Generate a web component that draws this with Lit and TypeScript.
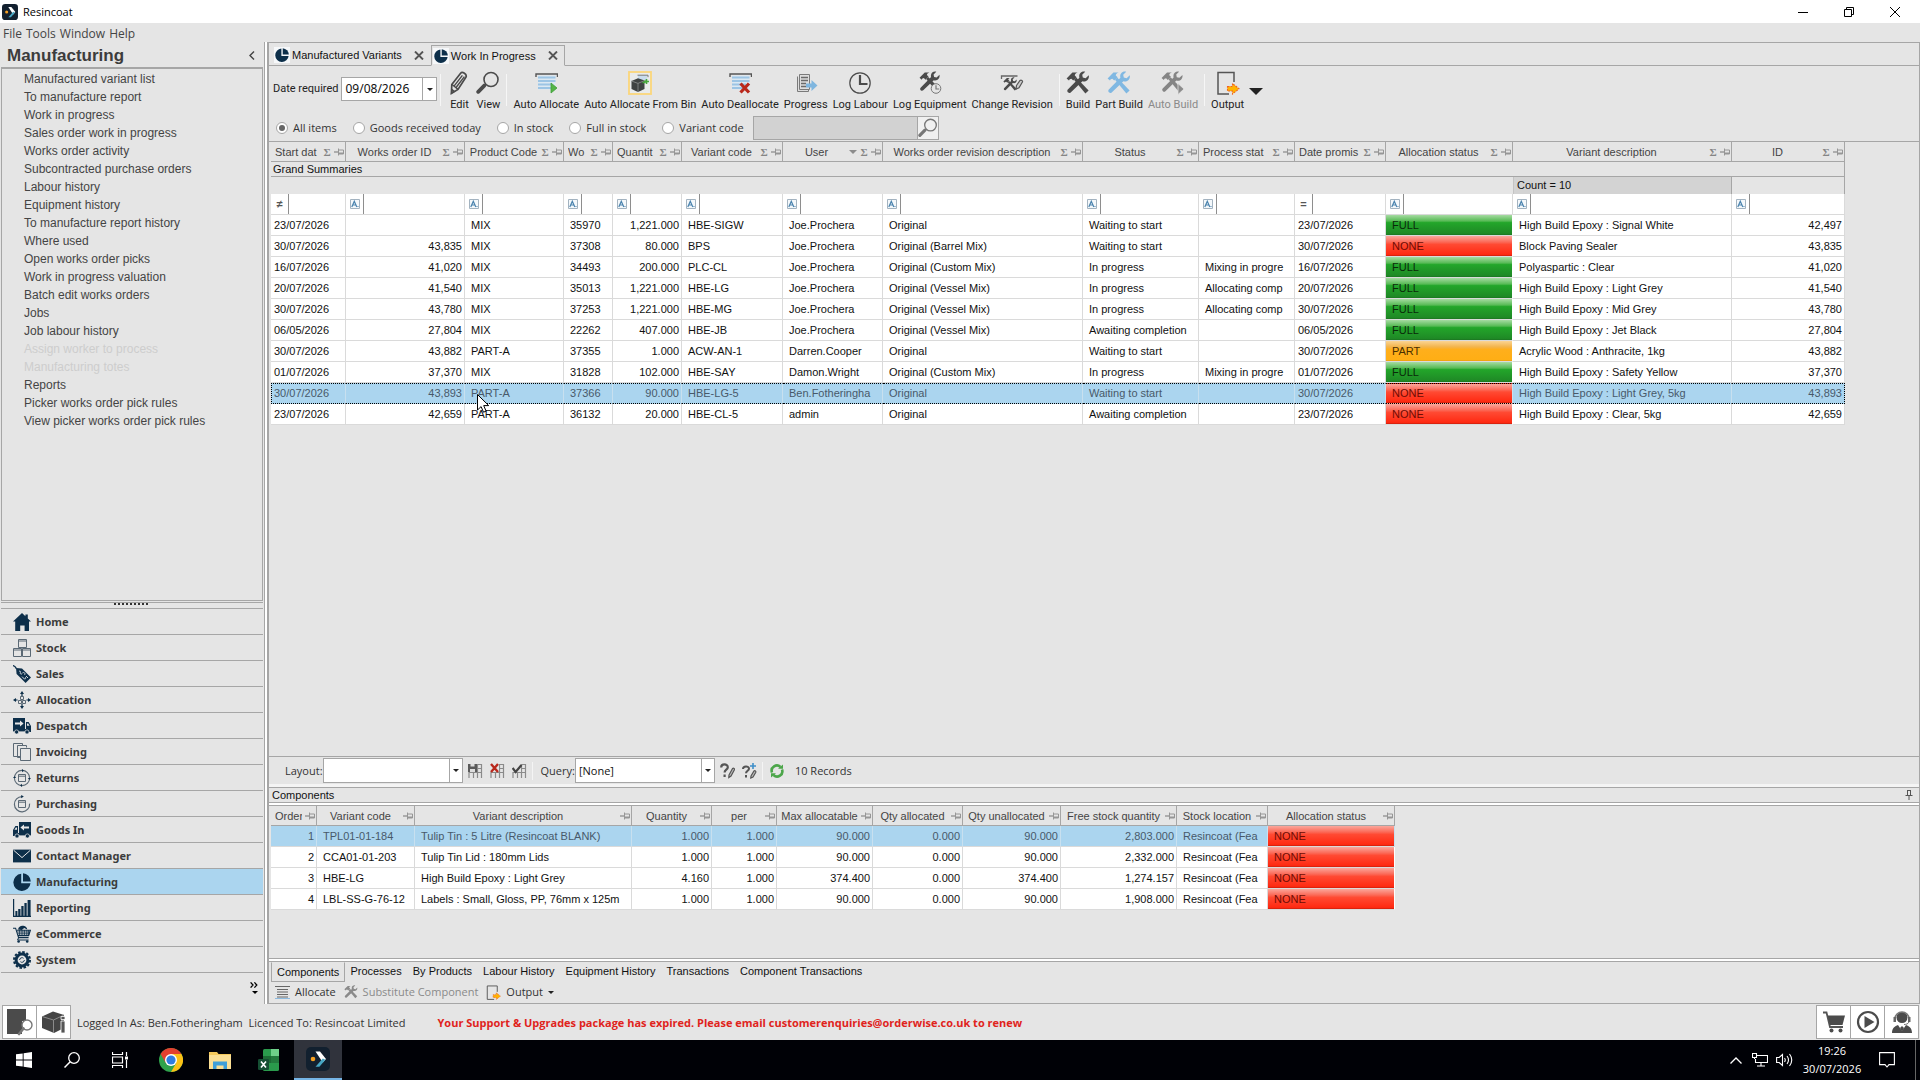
import { LitElement, html, svg, css, nothing } from "lit";
import { customElement } from "lit/decorators.js";
import { classMap } from "lit/directives/class-map.js";

const NAVY = "#0d2f4a";
const INK = "#4b4b4b";

const icon = (w: number, h: number, vb: string, body: unknown) => html`<svg
  width=${w} height=${h} viewBox=${vb} aria-hidden="true" focusable="false">${body}</svg>`;

/* ---------- shared shapes ---------- */
const logo = (s: number) => icon(s, s, "0 0 24 24", svg`
  <rect width="24" height="24" rx="5" fill="#12202f"/>
  <path d="M9.500 4.500h4.500l6 7.500-3.200 3.600z" fill="#fff"/>
  <path d="M16.800 11.500l2.600 1.200-6 7H9.500z" fill="#46a6c4"/>
  <circle cx="7" cy="12" r="2.300" fill="#f6a021"/>`);

const pie = (s: number) => icon(s, s, "0 0 18 18", svg`
  <path d="M8.200 .8a8.600 8.600 0 1 0 9.300 9.400H8.200z" fill=${NAVY}/>
  <path d="M10 .2A8.600 8.600 0 0 1 17.800 8.400H10z" fill=${NAVY}/>`);

const magnifier = (s: number, c = INK) => icon(s, s, "0 0 24 24", svg`
  <circle cx="15" cy="8.5" r="7" fill="none" stroke=${c} stroke-width="1.600"/>
  <path d="M9.800 13.200L8 15" stroke=${c} stroke-width="1.600"/>
  <path d="M8.300 14.600L2.200 20.800" stroke=${c} stroke-width="3.800" stroke-linecap="round"/>`);

const toolsShape = (c: string) => svg`
  <path d="M.6 7.400L6.400 1.600h5.200c-1.800 .6-2.800 1.600-2.800 2.800l1.800 1.800-3.400 3.400-1.800-1.800-1.700 .4L3 9.600z" fill=${c}/>
  <path d="M8 8.800l2.200-2.200L22.600 19.400 19.400 22.600z" fill=${c}/>
  <path d="M22.800 4.200l-3.200 3-2.800-.6-.6-2.800 3-3c-2.800-.8-6 1-6 4.400 0 .8 .1 1.200 .2 1.600L1.800 18.600c-1.600 1.800 1 4.600 2.900 2.900L16.400 10.200c3.600 1.200 7.200-1.900 6.400-6z" fill=${c}/>`;
const tools = (s: number, c: string) => icon(s, s, "0 0 24 24", toolsShape(c));

const sheetShape = svg`
  <path d="M1 4V1h21.500v3" fill="none" stroke="#555" stroke-width="1.400"/>
  <rect x="3" y="2.500" width="17.500" height="14" fill="#dbe8f2"/>
  <path d="M3 4.500h17.500M3 8h17.500M3 11.500h14M3 15h14" stroke="#9cc4e4" stroke-width="1.800"/>`;

const outputShape = svg`
  <path d="M18 11V1.500H2V23h11" fill="none" stroke="#555" stroke-width="1.500"/>
  <path d="M11.500 15.500h5v-3l6.500 5.300-6.500 5.200v-3h-5z" fill="#ffb400" stroke="#f0641e" stroke-width="1.100" stroke-dasharray="2 1"/>`;
const output = (s: number) => icon(s, s, "0 0 24 24", outputShape);

const pin = icon(10, 8, "0 0 10 8", svg`
  <path d="M0 4h4" stroke="#969696" stroke-width="1.400"/>
  <path d="M4.500 .5v7M4.500 2h5v4h-5" fill="none" stroke="#969696"/>
  <path d="M5 4.500h4.500V6H5z" fill="#969696"/>`);

const arrow = (w: number, c = "#222") => icon(w, w / 2, "0 0 10 5", svg`<path d="M0 0h10L5 5z" fill=${c}/>`);

const truckShape = svg`
  <path d="M0 1h12v11H0z" fill=${NAVY}/>
  <path d="M13 5h2.600L18 9v6h-5z" fill=${NAVY}/>
  <path d="M14 6.400h1.200l1.400 2.400H14z" fill="#e5e5e5"/>
  <path d="M0 12h18v2.400H0z" fill=${NAVY}/>
  <circle cx="3.600" cy="15" r="2.100" fill=${NAVY} stroke="#e5e5e5" stroke-width=".7"/>
  <circle cx="14" cy="15" r="2.100" fill=${NAVY} stroke="#e5e5e5" stroke-width=".7"/>
  <path d="M2 5.600h5V3.600l3.600 3L7 9.600v-2H2z" fill="#e5e5e5"/>`;

/* ---------- module icons ---------- */
const line = (d: string, w = 1) => svg`<path d=${d} fill="none" stroke="#5b6975" stroke-width=${w}/>`;
const nav = (body: unknown) => icon(18, 18, "0 0 18 18", body);

const modules: [string, unknown][] = [
  ["Home", nav(svg`<path d="M9 0l3.400 3.200V1.600h2.400v3.800L18 8.600h-2V18h-4.400v-5.400H7.200V18H2.200V8.600H0z" fill=${NAVY}/>`)],
  ["Stock", nav(line("M5.500 .5h8v8h-8zM.5 9.500h8v8h-8zM9.500 9.500h8v8h-8zM5.500 2h8M.5 11h8M9.500 11h8"))],
  ["Sales", nav(svg`
    <path d="M0 .6c2 .4 2.600 1.400 3.400 3" fill="none" stroke=${NAVY} stroke-width="1.400"/>
    <path d="M3 3l6 .4L18 12.400 12.600 18 3.600 9z" fill=${NAVY}/>
    <path d="M6 6.400c1-.8 2 .2 1.400 1.200s.4 2 1.600 1.200M9.400 8c1.800-1.400 3.400 .6 2 2M9 11.600l2.400 2.400c1.200 .2 1.800-.8 1-1.800M13 11l2 2" fill="none" stroke="#cfd6dc" stroke-width="1"/>`)],
  ["Allocation", nav(svg`
    <path d="M9 0l2 3H7zM9 18l2-3H7zM0 9l3-2v4zM18 9l-3-2v4z" fill=${NAVY}/>
    <path d="M9 2v3M9 13v3M2 9h2.600M13.400 9H16" stroke=${NAVY} stroke-width="1.200"/>
    ${line("M7.500 5.500h3v3h-3zM5.500 9.500h3v3h-3zM9.500 9.500h3v3h-3z")}`)],
  ["Despatch", nav(truckShape)],
  ["Invoicing", nav(svg`${line("M8.500 13.500h-8v-13h9v2M4.500 14.500v-12h9v2M4.500 14.500h3")}
    <path d="M7.500 5.500h10v12h-10z" fill="#e5e5e5" stroke="#5b6975"/>`)],
  ["Returns", nav(svg`${line("M5.500 5.500h7v7h-7zM5.500 7.200h7")}
    <circle cx="9" cy="9" r="7.600" fill="none" stroke="#5b6975" stroke-width="1.100"/>
    <path d="M9 0l1.800 1.600L9 3.200zM9 18l-1.800-1.600L9 14.800zM0 9l1.600-1.800L3.200 9zM18 9l-1.600 1.800L14.800 9z" fill=${NAVY}/>`)],
  ["Purchasing", nav(svg`${line("M5.500 5.500h7v7h-7zM5.500 7.200h7")}
    <path d="M9 1.600A7.600 7.600 0 1 0 16.600 8.600" fill="none" stroke="#5b6975" stroke-width="1.200"/>
    <path d="M8.200 0l2.600 1.600-2.600 1.700z" fill=${NAVY}/>`)],
  ["Goods In", nav(svg`<g transform="translate(18 0) scale(-1 1)">${truckShape}</g>`)],
  ["Contact Manager", nav(svg`<path d="M0 2.600h18v12.800H0z" fill=${NAVY}/>
    <path d="M.6 3.200L9 10.600l8.400-7.400" fill="none" stroke="#e5e5e5" stroke-width="1"/>`)],
  ["Manufacturing", pie(18)],
  ["Reporting", nav(svg`<path d="M.6 0v17.400H18" fill="none" stroke=${NAVY} stroke-width="1.200"/>
    <path d="M2.400 12h2v5h-2zM5.200 10h2.300v7H5.200zM8.300 7h2.300v10H8.300zM11.400 4h2.300v13h-2.300zM14.600 1h3v16h-3z" fill=${NAVY}/>`)],
  ["eCommerce", nav(svg`<path d="M5 4.600C5.600 1.400 8 .4 10.400 .8c2.600 .4 3.800 2 3.800 3.800l-3-1.600-2.400 2z" fill=${NAVY}/>
    <path d="M0 3.200h2.600l3 9.400h10M4 5.200h13.400l-1.800 5.400H5.200" fill="none" stroke=${NAVY} stroke-width="1.100"/>
    <path d="M4 7h13M5 8.800h11.400M6.600 5v6M9 5v6M11.400 5v6M13.800 5v6M15.600 5v6" stroke=${NAVY} stroke-width=".8"/>
    <path d="M5.600 12.600L4.600 15h11" fill="none" stroke=${NAVY}/>
    <circle cx="5.600" cy="16.500" r="1.300" fill=${NAVY}/><circle cx="14.200" cy="16.500" r="1.300" fill=${NAVY}/>`)],
  ["System", nav(svg`
    <circle cx="9" cy="9" r="8" fill="none" stroke=${NAVY} stroke-width="2" stroke-dasharray="2.500 1.690"/>
    <circle cx="9" cy="9" r="5.900" fill="none" stroke=${NAVY} stroke-width="3"/>
    <path d="M6.600 9a2.400 2.400 0 0 1 4-1.700M11.400 9a2.400 2.400 0 0 1-4 1.700" fill="none" stroke=${NAVY} stroke-width=".9"/>`)],
];

/* ---------- toolbar icons ---------- */
const big = (body: unknown) => icon(24, 24, "0 0 24 24", body);
const clockShape = svg`<circle cx="12" cy="12" r="10.200" fill="none" stroke=${INK} stroke-width="1.200"/>
  <path d="M12 4v9h7.500" fill="none" stroke=${INK} stroke-width="2.200"/>`;

const pencilIcon = big(svg`
  <path d="M4.800 13.500L13.600 2.200c1.800-2 6.600 1 5.400 3.800L11 18.400l-6.600 4z" fill="none" stroke=${INK} stroke-width="1.700"/>
  <path d="M7.400 14.600L15.400 4.400M9.400 16L17.400 5.600M5 13.500l5.800 4.600M4.600 22l.4-3.400 2.400 1.800z" fill="none" stroke=${INK} stroke-width="1.400"/>`);
const autoAllocateIcon = big(svg`<g transform="translate(1 2)">${sheetShape}</g>
  <path d="M17 12l6 5-6 5z" fill="#54b447" stroke="#3d9f38" stroke-width=".8"/>`);
const fromBinIcon = big(svg`<rect x="1" y="1" width="22" height="22" fill="#e9ebeb" stroke="#fbd67a" stroke-width="1.800"/>
  <path d="M10 4.500h9V9h-9z" fill="#c9dced"/><path d="M9.500 4.200h10.500v2" fill="none" stroke="#777"/>
  <path d="M3.500 10L10 7.200l6.500 2.400v8.300L10 21l-6.500-3z" fill="#3e4242"/>
  <path d="M3.500 10L10 12.400l6.500-2.800M10 12.400V21" fill="none" stroke="#8b8f8f" stroke-width=".8"/>
  <path d="M14.500 11.500c2 0 3-.6 3.400-2M18.500 8v5M16 10.500h5" stroke="#46a63c" stroke-width="1.600" fill="none"/>`);
const deallocateIcon = big(svg`<g transform="translate(1 2)">${sheetShape}</g>
  <path d="M12.500 12.500l8.500 9M21 12.500l-8.500 9" stroke="#b9281c" stroke-width="3.200"/>`);
const progressIcon = big(svg`
  <path d="M3.500 5.500v15h11V18" fill="#dedede" stroke="#7a7a7a"/><path d="M5.500 3.500h10v15h-10z" fill="#dedede" stroke="#7a7a7a"/>
  <path d="M7 6.500h7M7 9.500h7M7 12.500h5M7 15.500h5" stroke="#6a6a6a" stroke-width="1.300"/>
  <path d="M12 12.500h5.500V9l6 5.500-6 5.500v-3.500H12z" fill="#7fb6df"/>`);
const logLabourIcon = big(clockShape);
const logEquipmentIcon = big(svg`<g transform="translate(1 0) scale(.9)">${toolsShape(INK)}</g>
  <circle cx="18" cy="17.500" r="4.800" fill="#e5e5e5" stroke="#777"/>
  <path d="M18 14.200v3.800h3.200" fill="none" stroke="#777" stroke-width="1.200"/>`);
const revisionIcon = big(svg`<path d="M1.500 8V5h16" fill="none" stroke="#666" stroke-width="1.300"/>
  <g transform="translate(3 6) scale(.6)">${toolsShape(INK)}</g>
  <path d="M16.500 14.500l3.500-5c1.200-1 3 .2 2.400 1.600L19 16.800l-3 1.400z" fill="#ccc" stroke="#555" stroke-width="1.200"/>`);
const autoBuildIcon = big(svg`<g transform="scale(.94)">${toolsShape("#858585")}</g>
  <path d="M17 12.500l6 5.500-6 5.500z" fill="#8c8c8c" stroke="#e5e5e5" stroke-width=".8"/>`);

/* ---------- data ---------- */
const links = [
  "Manufactured variant list", "To manufacture report", "Work in progress", "Sales order work in progress",
  "Works order activity", "Subcontracted purchase orders", "Labour history", "Equipment history",
  "To manufacture report history", "Where used", "Open works order picks", "Work in progress valuation",
  "Batch edit works orders", "Jobs", "Job labour history", "Assign worker to process",
  "Manufacturing totes", "Reports", "Picker works order pick rules", "View picker works order pick rules",
];
const disabledLinks = new Set(["Assign worker to process", "Manufacturing totes"]);

type Col = { t: string; w: number; k: "d" | "n" | "t" | "s"; f?: string; sort?: boolean; cut?: boolean };
const cols: Col[] = [
  { t: "Start dat", w: 75, k: "d", f: "≠", cut: true },
  { t: "Works order ID", w: 119, k: "n" },
  { t: "Product Code", w: 99, k: "t" },
  { t: "Wo", w: 49, k: "t", cut: true },
  { t: "Quantit", w: 69, k: "n", cut: true },
  { t: "Variant code", w: 101, k: "t" },
  { t: "User", w: 100, k: "t", sort: true },
  { t: "Works order revision description", w: 200, k: "t" },
  { t: "Status", w: 116, k: "t" },
  { t: "Process stat", w: 96, k: "t", cut: true },
  { t: "Date promis", w: 91, k: "d", f: "=", cut: true },
  { t: "Allocation status", w: 127, k: "s" },
  { t: "Variant description", w: 219, k: "t" },
  { t: "ID", w: 113, k: "n" },
];
const rows: string[][] = [
  ["23/07/2026", "", "MIX", "35970", "1,221.000", "HBE-SIGW", "Joe.Prochera", "Original", "Waiting to start", "", "23/07/2026", "FULL", "High Build Epoxy : Signal White", "42,497"],
  ["30/07/2026", "43,835", "MIX", "37308", "80.000", "BPS", "Joe.Prochera", "Original (Barrel Mix)", "Waiting to start", "", "30/07/2026", "NONE", "Block Paving Sealer", "43,835"],
  ["16/07/2026", "41,020", "MIX", "34493", "200.000", "PLC-CL", "Joe.Prochera", "Original (Custom Mix)", "In progress", "Mixing in progre", "16/07/2026", "FULL", "Polyaspartic : Clear", "41,020"],
  ["20/07/2026", "41,540", "MIX", "35013", "1,221.000", "HBE-LG", "Joe.Prochera", "Original (Vessel Mix)", "In progress", "Allocating comp", "20/07/2026", "FULL", "High Build Epoxy : Light Grey", "41,540"],
  ["30/07/2026", "43,780", "MIX", "37253", "1,221.000", "HBE-MG", "Joe.Prochera", "Original (Vessel Mix)", "In progress", "Allocating comp", "30/07/2026", "FULL", "High Build Epoxy : Mid Grey", "43,780"],
  ["06/05/2026", "27,804", "MIX", "22262", "407.000", "HBE-JB", "Joe.Prochera", "Original (Vessel Mix)", "Awaiting completion", "", "06/05/2026", "FULL", "High Build Epoxy : Jet Black", "27,804"],
  ["30/07/2026", "43,882", "PART-A", "37355", "1.000", "ACW-AN-1", "Darren.Cooper", "Original", "Waiting to start", "", "30/07/2026", "PART", "Acrylic Wood : Anthracite, 1kg", "43,882"],
  ["01/07/2026", "37,370", "MIX", "31828", "102.000", "HBE-SAY", "Damon.Wright", "Original (Custom Mix)", "In progress", "Mixing in progre", "01/07/2026", "FULL", "High Build Epoxy : Safety Yellow", "37,370"],
  ["30/07/2026", "43,893", "PART-A", "37366", "90.000", "HBE-LG-5", "Ben.Fotheringha", "Original", "Waiting to start", "", "30/07/2026", "NONE", "High Build Epoxy : Light Grey, 5kg", "43,893"],
  ["23/07/2026", "42,659", "PART-A", "36132", "20.000", "HBE-CL-5", "admin", "Original", "Awaiting completion", "", "23/07/2026", "NONE", "High Build Epoxy : Clear, 5kg", "42,659"],
];
const compCols: Col[] = [
  { t: "Order", w: 46, k: "n", cut: true },
  { t: "Variant code", w: 98, k: "t" },
  { t: "Variant description", w: 217, k: "t" },
  { t: "Quantity", w: 80, k: "n" },
  { t: "per", w: 65, k: "n" },
  { t: "Max allocatable", w: 96, k: "n" },
  { t: "Qty allocated", w: 90, k: "n" },
  { t: "Qty unallocated", w: 98, k: "n" },
  { t: "Free stock quantity", w: 116, k: "n" },
  { t: "Stock location", w: 91, k: "t" },
  { t: "Allocation status", w: 127, k: "s" },
];
const compRows: string[][] = [
  ["1", "TPL01-01-184", "Tulip Tin : 5 Litre (Resincoat BLANK)", "1.000", "1.000", "90.000", "0.000", "90.000", "2,803.000", "Resincoat (Fea", "NONE"],
  ["2", "CCA01-01-203", "Tulip Tin Lid : 180mm Lids", "1.000", "1.000", "90.000", "0.000", "90.000", "2,332.000", "Resincoat (Fea", "NONE"],
  ["3", "HBE-LG", "High Build Epoxy : Light Grey", "4.160", "1.000", "374.400", "0.000", "374.400", "1,274.157", "Resincoat (Fea", "NONE"],
  ["4", "LBL-SS-G-76-12", "Labels : Small, Gloss, PP, 76mm x 125m", "1.000", "1.000", "90.000", "0.000", "90.000", "1,908.000", "Resincoat (Fea", "NONE"],
];

@customElement("app-root")
export class AppRoot extends LitElement {
  static styles = css`
    :host {
      display: flex; flex-direction: column; min-height: 100vh; box-sizing: border-box;
      background: #e5e5e5; color: #222; cursor: default;
      font: 11px/14px "Liberation Sans", Arial, sans-serif;
    }
    *, *::before, *::after { box-sizing: border-box; }
    button, input, select { font: inherit; color: inherit; margin: 0; padding: 0; border: 0; background: none; border-radius: 0; outline: none; }
    a { color: inherit; text-decoration: none; }
    svg { display: block; flex: none; }
    ul { list-style: none; margin: 0; padding: 0; }
    .ui { font-family: "Open Sans", "Noto Sans", sans-serif; }

    .title { display: flex; align-items: center; height: 23px; background: #fff; padding-left: 2px; gap: 5px; color: #000; }
    .title span { flex: 1; }
    .win { display: flex; padding-right: 2px; }
    .win button { width: 46px; height: 20px; display: grid; place-items: center; }
    .menu { display: flex; gap: 4px; height: 19px; padding: 2px 0 0 3px; align-items: center; font-size: 12px; color: #444; }

    .body { flex: 1; display: flex; min-height: 0; }

    .side { width: 264px; flex: none; display: flex; flex-direction: column; padding: 0 1px; }
    .side-head { display: flex; align-items: center; justify-content: space-between; height: 25px; padding: 2px 8px 0 6px; }
    .side-head h1 { margin: 0; font-size: 17px; line-height: 22px; color: #3c3c3c; }
    .links { flex: 1; border: 1px solid #a6a6a6; border-top-width: 2px; padding: 1px 0 0 22px; font-size: 12px; line-height: 18px; color: #444; }
    .links .off { color: #cdcdcd; }
    .grip { margin-top: 1px; height: 7px; border: 1px solid #a6a6a6; border-width: 1px 0; display: grid; justify-items: center; align-items: start; }
    .mods a { display: flex; align-items: center; gap: 5px; height: 26px; padding-left: 12px; border-bottom: 1px solid #a6a6a6;
      font: bold 11px/16px "Noto Sans", "Open Sans", sans-serif; color: #3c3c3c; }
    .mods .on { background: #abd5ef; }
    .more { height: 31px; display: flex; flex-direction: column; align-items: flex-end; padding: 9px 5px 0 0; gap: 3px; }
    .split { width: 5px; flex: none; background: #fff; border-left: 1px solid #a6a6a6; border-right: 2px solid #a6a6a6; }

    .main { flex: 1; min-width: 0; display: flex; flex-direction: column; border: 1px solid #a6a6a6; border-left: 0; }
    .tabs { height: 23px; display: flex; padding-left: 3px; border-bottom: 1px solid #a6a6a6; align-items: flex-end; color: #111; }
    .tab { display: flex; align-items: center; height: 20px; gap: 2px; padding: 0 7px 0 2px; }
    .tab .pic { background: #f6f8fa; padding: 1px; }
    .tab a { padding-right: 10px; }
    .tab.on { border: 1px solid #a6a6a6; border-bottom-color: #e5e5e5; height: 21px; margin-bottom: -1px; background: #e5e5e5; padding: 0 6px 0 1px; }

    .tools { display: flex; height: 46px; padding: 5px 4px 0; align-items: flex-start; color: #222; font-family: "Roboto", "Open Sans", sans-serif; }
    .date { display: flex; align-items: center; margin-top: 6px; gap: 3px; margin-right: 3px; }
    .combo { display: flex; height: 24px; border: 1px solid #a6a6a6; background: #fff; }
    .combo input { width: 80px; padding-left: 3px; font: 12px/22px "Noto Sans", "Open Sans", sans-serif; color: #111; }
    .combo button { width: 14px; border-left: 1px solid #a6a6a6; display: grid; place-items: center; }
    .sep { width: 1px; height: 32px; background: #f6f6f6; margin: 3px 0 0; flex: none; }
    .grp { display: flex; gap: 5px; padding: 0 6px; }
    .tool { display: flex; flex-direction: column; align-items: center; gap: 3px; white-space: nowrap; }
    .tool:disabled { color: #8a8a8a; }
    .drop { align-self: center; }

    .radios { display: flex; align-items: center; height: 29px; padding: 2px 0 0 7px; color: #333; }
    .radios label { display: flex; align-items: center; gap: 5px; margin-right: 16px; white-space: nowrap; }
    input[type="radio"] { appearance: none; width: 12px; height: 12px; border: 1px solid #a6a6a6; border-radius: 50%; background: #fff; display: grid; place-items: center; }
    input[type="radio"]:checked::before { content: ""; width: 6px; height: 6px; border-radius: 50%; background: #666; }
    .find { display: flex; height: 24px; border: 1px solid #a6a6a6; margin-left: -7px; }
    .find input { width: 164px; background: #d2d2d2; border-right: 1px solid #a6a6a6; }
    .find button { width: 20px; background: #f0f0f0; display: grid; place-items: center; }

    .pane { position: relative; flex: 1; border-top: 1px solid #a6a6a6; overflow: hidden; min-height: 0; }
    table { table-layout: fixed; border-collapse: separate; border-spacing: 0; margin-left: 2px; color: #111; }
    th, td { padding: 0; font-weight: normal; text-align: left; overflow: hidden; white-space: nowrap; line-height: 14px; }
    .head th { height: 20px; border-right: 1px solid #a6a6a6; border-bottom: 1px solid #a6a6a6; color: #444; background: #e5e5e5; }
    .hc { display: flex; align-items: center; padding: 0 1px 0 4px; gap: 3px; }
    .hc .cap { flex: 1; min-width: 0; overflow: hidden; text-align: center; }
    .hc .cut { text-align: left; }
    .hc .sig { color: #858585; font: bold 11px/14px "Liberation Serif", serif; width: 8px; text-align: center; }
    .gs th { height: 15px; line-height: 13px; padding-left: 2px; border-bottom: 1px solid #a6a6a6; border-right: 1px solid #a6a6a6; color: #111; }
    .sum td { height: 17px; line-height: 15px; }
    .sum .cnt { background: #d3d3d3; border-right: 1px solid #a6a6a6; border-left: 1px solid #c4c4c4; padding-left: 3px; }
    .sum .last { border-right: 1px solid #a6a6a6; }
    .filter td, tbody td { height: 21px; background: #fff; border-right: 1px solid #dadada; border-bottom: 1px solid #dadada; }
    .fc { display: flex; height: 20px; align-items: center; }
    .fc .op { width: 18px; height: 20px; border-right: 1px solid #8e8e8e; display: grid; place-items: center; color: #555; font-weight: bold; flex: none; }
    .fc input { flex: 1; min-width: 0; }
    .d { padding-left: 3px; }
    .n { text-align: right; padding-right: 2px; }
    .t, .s { padding-left: 6px; }
    tbody td.s { border-right-color: #fff; }
    tbody td.FULL { background: linear-gradient(#a6dba2, #58bb56 30%, #23a62a 38%, #1f8a26 92%, #1b7420); color: #0a2a0a; }
    tbody td.NONE { background: linear-gradient(#fba79c, #fb6a58 30%, #ff4a33 42%, #ff2a12 92%, #c91f0c); color: #6d0c04; }
    tbody td.PART { background: linear-gradient(#fbd493, #f3b44a 30%, #ffaf1c 42%, #ffae14 96%, #d9920c); color: #4a2f00; }
    tr.sel td:not(.s) { background: #abd5ef; color: #48596a; }
    tr.sel td { border-right-color: #c8e0ef; }
    tr.focus td { border-top: 1px dotted #000; border-bottom: 1px dotted #000; padding-bottom: 1px; }
    tr.focus td:first-child { border-left: 1px dotted #000; padding-left: 2px; }
    tr.focus td:last-child { border-right: 1px dotted #000; }
    .pointer { position: absolute; left: 208px; top: 252px; pointer-events: none; }

    .bar { display: flex; align-items: center; height: 28px; padding-left: 16px; border-top: 1px solid #a6a6a6; color: #333; }
    .pick { position: relative; display: flex; }
    .pick select { appearance: none; width: 140px; height: 25px; border: 1px solid #a6a6a6; background: #fff; padding-left: 3px; color: #111; }
    .pick span { position: absolute; right: 1px; top: 1px; bottom: 1px; width: 13px; border-left: 1px solid #a6a6a6; display: grid; place-items: center; background: #fff; pointer-events: none; }
    .icons { display: flex; gap: 7px; padding: 0 5px; }
    .thin { width: 1px; height: 18px; background: #f4f4f4; margin-right: 2px; }
    .lead { padding-left: 6px; }
    .ptitle { display: flex; align-items: center; justify-content: space-between; height: 19px; border-top: 3px solid #f4f4f4; background: #e5e5e5; }
    .ptitle h2 { margin: 0; padding: 0 6px 0 3px; flex: 1; display: flex; justify-content: space-between; align-items: center;
      font: 11px/14px "Liberation Sans", Arial, sans-serif; height: 16px; border: 1px solid #a6a6a6; border-width: 1px 0; color: #111; }
    .low-wrap { border-top: 2px solid #fff; border-bottom: 2px solid #fff; }
    .low-in { border-top: 1px solid #a6a6a6; border-bottom: 1px solid #a6a6a6; height: 154px; overflow: hidden; }
    .btabs { display: flex; height: 20px; padding-left: 2px; color: #111; align-items: flex-start; border-top: 1px solid #a6a6a6; }
    .btabs a { padding: 2px 0 3px; margin-left: 11px; }
    .btabs .on { margin: 0 -6px 0 0; padding: 2px 5px 2px; border: 1px solid #a6a6a6; border-top-color: #e5e5e5; }
    .cmds { display: flex; align-items: center; height: 22px; padding-left: 6px; gap: 8px; }
    .cmds button { display: flex; align-items: center; gap: 5px; color: #333; }
    .cmds button:disabled { color: #8a8a8a; }

    .status { display: flex; align-items: center; height: 36px; padding: 0 2px; color: #333; }
    .status .sq { width: 35px; height: 34px; border: 1px solid #a6a6a6; background: #fff; display: grid; place-items: center; margin-right: -1px; }
    .status .who { padding: 1px 0 0 7px; white-space: pre; }
    .status .warn { padding: 1px 0 0 32px; font-weight: bold; color: #e0231c; flex: 1; }

    .task { display: flex; height: 40px; background: #000106; color: #fff; }
    .task .app { width: 48px; height: 40px; display: grid; place-items: center; }
    .pinned { display: flex; gap: 1px; padding-left: 3px; }
    .task .app.on { background: #30333c; border-bottom: 2px solid #76b5e6; }
    .tray { margin-left: auto; display: flex; align-items: center; }
    .net { padding: 0 8px 0 10px; }
    .clock { width: 72px; text-align: center; line-height: 18px; margin: 0 11px 0 3px; }
    .desk { width: 5px; height: 40px; border-left: 1px solid #666; margin-left: 20px; }
  `;

  private headRow(list: Col[], sigma: boolean) {
    return html`<tr class="head">${list.map((c) => html`<th scope="col"><div class="hc">
      <span class=${classMap({ cap: true, cut: !!c.cut })}>${c.t}</span>
      ${c.sort ? arrow(8, "#8c8c8c") : nothing}
      ${sigma ? html`<span class="sig">Σ</span>` : nothing}
      ${pin}</div></th>`)}</tr>`;
  }

  private bodyRow(list: Col[], r: string[], sel: boolean, focus: boolean) {
    return html`<tr class=${classMap({ sel, focus })}>${list.map((c, i) =>
      html`<td class=${c.k === "s" ? `s ${r[i]}` : c.k}>${r[i]}</td>`)}</tr>`;
  }

  private tool(label: string, ic: unknown, disabled = false) {
    return html`<button class="tool" type="button" ?disabled=${disabled}>${ic}<span>${label}</span></button>`;
  }

  private pick(label: string, id: string, value: string) {
    return html`<label for=${id}>${label}</label><div class="pick">
      <select id=${id}><option>${value}</option></select><span>${arrow(6)}</span></div>`;
  }

  private gridIcon(extra: unknown) {
    return icon(15, 16, "0 0 15 16", svg`
      <path d="M1 5.500h12.500M1 9.500h12.500M1 15V9M5.500 15V9M9.500 15V3M13.500 15V1.500H9.500v2" fill="none" stroke="#8a8a8a" stroke-width="1.200"/>${extra}`);
  }

  private side() {
    return html`<aside class="side">
      <div class="side-head"><h1>Manufacturing</h1>
        <button type="button" aria-label="Collapse">${icon(6, 9, "0 0 6 9", svg`<path d="M5 .6L1 4.500l4 3.900" fill="none" stroke="#444" stroke-width="1.400"/>`)}</button></div>
      <ul class="links">${links.map((l) => html`<li>${disabledLinks.has(l)
        ? html`<a class="off" aria-disabled="true">${l}</a>` : html`<a href="#">${l}</a>`}</li>`)}</ul>
      <div class="grip">${icon(36, 2, "0 0 36 2", svg`<path d="M0 1h36" stroke="#333" stroke-width="2" stroke-dasharray="2 2"/>`)}</div>
      <nav class="mods">${modules.map(([n, i]) => html`<a href="#" class=${classMap({ on: n === "Manufacturing" })}>${i}${n}</a>`)}</nav>
      <div class="more">${icon(8, 6, "0 0 8 6", svg`<path d="M.6 .4L3 3 .6 5.600M4.400 .4L6.800 3 4.400 5.600" fill="none" stroke="#000" stroke-width="1.300"/>`)}${arrow(6, "#000")}</div>
    </aside>`;
  }

  private cross() {
    return icon(10, 9, "0 0 10 9", svg`<path d="M1 .5l8 8M9 .5l-8 8" stroke="#555" stroke-width="1.900"/>`);
  }

  render() {
    return html`
      <header class="title ui">${logo(16)}<span>Resincoat</span>
        <div class="win">
          <button type="button" aria-label="Minimise">${icon(10, 10, "0 0 10 10", svg`<path d="M0 5.500h10" stroke="#000"/>`)}</button>
          <button type="button" aria-label="Restore">${icon(10, 10, "0 0 10 10", svg`<path d="M.5 2.500h7v7h-7zM2.500 2.500v-2h7v7h-2" fill="none" stroke="#000"/>`)}</button>
          <button type="button" aria-label="Close">${icon(10, 10, "0 0 10 10", svg`<path d="M0 0l10 10M10 0L0 10" stroke="#000"/>`)}</button>
        </div></header>
      <nav class="menu ui"><button type="button">File</button><button type="button">Tools</button><button type="button">Window</button><button type="button">Help</button></nav>

      <div class="body">
        ${this.side()}
        <div class="split"></div>
        <main class="main">
          <div class="tabs">
            <div class="tab"><span class="pic">${pie(14)}</span><a href="#">Manufactured Variants</a><button type="button" aria-label="Close tab">${this.cross()}</button></div>
            <div class="tab on"><span class="pic">${pie(14)}</span><a href="#">Work In Progress</a><button type="button" aria-label="Close tab">${this.cross()}</button></div>
          </div>

          <div class="tools">
            <div class="date"><label for="req">Date required</label>
              <div class="combo"><input id="req" type="text" value="09/08/2026"><button type="button" aria-label="Open calendar">${arrow(6)}</button></div></div>
            <div class="sep"></div>
            <div class="grp">${this.tool("Edit", pencilIcon)}${this.tool("View", magnifier(24))}</div>
            <div class="sep"></div>
            <div class="grp">
              ${this.tool("Auto Allocate", autoAllocateIcon)}
              ${this.tool("Auto Allocate From Bin", fromBinIcon)}
              ${this.tool("Auto Deallocate", deallocateIcon)}
              ${this.tool("Progress", progressIcon)}
              ${this.tool("Log Labour", logLabourIcon)}
              ${this.tool("Log Equipment", logEquipmentIcon)}
              ${this.tool("Change Revision", revisionIcon)}
            </div>
            <div class="sep"></div>
            <div class="grp">
              ${this.tool("Build", tools(24, INK))}
              ${this.tool("Part Build", tools(24, "#80b8e2"))}
              ${this.tool("Auto Build", autoBuildIcon, true)}
            </div>
            <div class="sep"></div>
            <div class="grp">${this.tool("Output", output(24))}
              <button class="drop" type="button" aria-label="Output options">${arrow(14)}</button></div>
          </div>

          <div class="radios ui">
            ${["All items", "Goods received today", "In stock", "Full in stock", "Variant code"].map((t, i) =>
              html`<label><input type="radio" name="scope" ?checked=${i === 0}>${t}</label>`)}
            <div class="find"><input type="text" aria-label="Variant code" disabled><button type="button" aria-label="Search">${magnifier(20, "#777")}</button></div>
          </div>

          <section class="pane">
            <table style="width:${cols.reduce((a, c) => a + c.w, 0)}px">
              <colgroup>${cols.map((c) => html`<col style="width:${c.w}px">`)}</colgroup>
              <thead>
                ${this.headRow(cols, true)}
                <tr class="gs"><th colspan="14">Grand Summaries</th></tr>
                <tr class="sum"><td colspan="12"></td><td class="cnt">Count = 10</td><td class="last"></td></tr>
                <tr class="filter">${cols.map((c) => html`<td><div class="fc"><span class="op">${c.f ?? icon(10, 10, "0 0 10 10", svg`
                  <path d="M.5 .5h9v9H.5z" fill="#f4f8fb" stroke="#a3b3c0"/>
                  <path d="M1.800 8L4.300 2.200 6.800 8M2.800 6h3" fill="none" stroke="#4a83ae" stroke-width="1.200"/><path d="M7.500 7.500h1" stroke="#4a83ae"/>`)}</span>
                  <input type="text" aria-label="Filter ${c.t}"></div></td>`)}</tr>
              </thead>
              <tbody>${rows.map((r, i) => this.bodyRow(cols, r, i === 8, i === 8))}</tbody>
            </table>
            <div class="pointer">${icon(13, 19, "0 0 13 19", svg`<path d="M.5 .5v15.500l3.600-3.400 2.400 5.600 2.600-1.100-2.400-5.500h5z" fill="#fff" stroke="#000"/>`)}</div>
          </section>

          <div class="bar ui">
            ${this.pick("Layout:", "layout", "")}
            <div class="icons">
              ${this.gridIcon(svg`<path d="M0 1h9v8H0z" fill="#5a5a5a"/><path d="M2.500 1h4v2.500h-4zM2 6h5v3H2z" fill="#ddd"/>`)}
              ${this.gridIcon(svg`<path d="M0 0h9v9H0z" fill="#e5e5e5"/><path d="M1 1l7 8M8 1L1 9" stroke="#b9281c" stroke-width="2.400"/>`)}
              ${this.gridIcon(svg`<path d="M0 0h9v9H0z" fill="#e5e5e5"/><path d="M.6 5l3 4L9.500 2" fill="none" stroke="#444" stroke-width="2.200"/>`)}
            </div>
            <div class="thin"></div>
            <span class="lead"></span>
            ${this.pick("Query:", "query", "[None]")}
            <div class="icons">
              ${icon(15, 16, "0 0 15 16", svg`<path d="M1.200 4.500c0-4 6.600-4 6.600-.3 0 2.500-3.200 2.500-3.200 5.300M4.600 11.500v2.500" fill="none" stroke="#555" stroke-width="2.200"/>
                <path d="M9 12l3.600-6.500c1-.8 2.200 .2 1.800 1.300L11 13l-2.200 1.500z" fill="#bbb" stroke="#555" stroke-width="1.200"/>`)}
              ${icon(15, 16, "0 0 15 16", svg`<path d="M1 6c0-3.400 6-3.400 6-.3 0 2.100-3 2.100-3 4.600M4 12v2.500" fill="none" stroke="#555" stroke-width="2"/>
                <path d="M9 13l3-5c1-.8 2.200 .2 1.800 1.300L11 14l-2.200 1z" fill="#bbb" stroke="#555" stroke-width="1.200"/><path d="M11 0v6M8 3h6" stroke="#3f8fc9" stroke-width="1.600"/>`)}
            </div>
            <div class="thin"></div>
            <div class="icons">${icon(14, 14, "0 0 14 14", svg`<path d="M2 8.500A5.200 5.200 0 0 1 10.500 3M12 5.500a5.200 5.200 0 0 1-8.500 5.500" fill="none" stroke="#4ca64a" stroke-width="2.600"/>
              <path d="M8 4.800h5V.6zM6 9.200H1v4.200z" fill="#4ca64a"/>`)}</div>
            <span class="lead">10 Records</span>
          </div>

          <div class="ptitle"><h2>Components ${icon(8, 10, "0 0 8 10", svg`<path d="M2 .5h4M2.500 .5v5M5.500 .5v5M.5 5.500h7M4 5.500V10" fill="none" stroke="#555"/>`)}</h2></div>
          <div class="low-wrap"><div class="low-in">
            <table style="width:${compCols.reduce((a, c) => a + c.w, 0)}px">
              <colgroup>${compCols.map((c) => html`<col style="width:${c.w}px">`)}</colgroup>
              <thead>${this.headRow(compCols, false)}</thead>
              <tbody>${compRows.map((r, i) => this.bodyRow(compCols, r, i === 0, false))}</tbody>
            </table>
          </div></div>
          <nav class="btabs">${["Components", "Processes", "By Products", "Labour History", "Equipment History", "Transactions", "Component Transactions"].map((t, i) =>
            html`<a href="#" class=${classMap({ on: i === 0 })}>${t}</a>`)}</nav>
          <div class="cmds ui">
            <button type="button">${icon(15, 13, "0 0 15 13", svg`<path d="M0 .5h15" stroke="#666"/><path d="M2 3.500h11M2 6h11M2 8.500h11M2 11h11" stroke="#666"/><path d="M0 12.500h15" stroke="#8dbbe0"/>`)}Allocate</button>
            <button type="button" disabled>${tools(14, "#8a8a8a")}Substitute Component</button>
            <button type="button">${output(15)}Output ${arrow(6)}</button>
          </div>
        </main>
      </div>

      <footer class="status ui">
        <button class="sq" type="button" aria-label="Find document">${icon(28, 28, "0 0 28 28", svg`<path d="M1 1h19v12h-4v13H1z" fill=${INK}/>
          <circle cx="21" cy="17" r="5" fill="#fff" stroke="#777" stroke-width="1.400"/><path d="M17.500 20.500L13 26" stroke="#777" stroke-width="2.600" stroke-linecap="round"/>`)}</button>
        <button class="sq" type="button" aria-label="Stock information">${icon(26, 24, "0 0 26 24", svg`<path d="M1 6.500L12 1.500l11 3.500v13L13 23 1 18z" fill="#454545"/>
          <path d="M1 6.500L12.500 10 23 5M12.500 10v13" fill="none" stroke="#8b8b8b"/><path d="M20 6.500h4v3h-4zM20 11h4v12h-4z" fill="#555" stroke="#fff" stroke-width=".8"/>`)}</button>
        <span class="who">Logged In As: Ben.Fotheringham  Licenced To: Resincoat Limited</span>
        <span class="warn">Your Support &amp; Upgrades package has expired. Please email customerenquiries@orderwise.co.uk to renew</span>
        <button class="sq" type="button" aria-label="Basket">${icon(24, 22, "0 0 24 22", svg`<path d="M1 1.500h3.500L8 16h13" fill="none" stroke="#555" stroke-width="1.800"/>
          <path d="M5.500 4.500H23L20.500 14H7.800z" fill="#4b4b4b"/><circle cx="9.500" cy="19.500" r="2" fill="#4b4b4b"/><circle cx="18.500" cy="19.500" r="2" fill="#4b4b4b"/>`)}</button>
        <button class="sq" type="button" aria-label="Videos">${icon(24, 24, "0 0 24 24", svg`<circle cx="12" cy="12" r="10" fill="none" stroke="#4b4b4b" stroke-width="2.200"/><path d="M8.500 6l10 6-10 6z" fill="#4b4b4b"/>`)}</button>
        <button class="sq" type="button" aria-label="Support">${icon(22, 24, "0 0 22 24", svg`<circle cx="11" cy="7.500" r="5.500" fill="#4b4b4b"/><path d="M4 9a7 7 0 0 1 14 0" fill="none" stroke="#777" stroke-width="1.600"/>
          <path d="M2.500 7h2.500v5H2.500zM17 7h2.500v5H17z" fill="#666"/><path d="M18 12c-1 2-3 2.500-5 2.500" fill="none" stroke="#777"/>
          <path d="M1 23c0-5 3-7 6-8l4 6 4-6c3 1 6 3 6 8z" fill="#4b4b4b"/><path d="M11 16l2 2-2 4-2-4z" fill="#4b4b4b"/>`)}</button>
      </footer>

      <nav class="task ui">
        <button class="app" type="button" aria-label="Start">${icon(16, 16, "0 0 16 16", svg`<path d="M0 2.300L6.700 1.400v6.200H0zM7.600 1.200L16 0v7.600H7.600zM0 8.400h6.700v6.200L0 13.700zM7.600 8.400H16V16l-8.400-1.200z" fill="#fff"/>`)}</button>
        <button class="app" type="button" aria-label="Search">${icon(16, 16, "0 0 16 16", svg`<circle cx="10" cy="6" r="5.300" fill="none" stroke="#fff" stroke-width="1.300"/><path d="M6.200 9.800L.5 15.500" stroke="#fff" stroke-width="1.500"/>`)}</button>
        <button class="app" type="button" aria-label="Task view">${icon(17, 16, "0 0 17 16", svg`<path d="M.5 0v2.500h10V0M.5 16v-2.500h10V16M.5 5h10v6H.500zM14.500 0v4M14.500 8v8" fill="none" stroke="#fff" stroke-width="1.200"/><path d="M13 4.500h3v3h-3z" fill="#fff"/>`)}</button>
        <div class="pinned">
        <button class="app" type="button" aria-label="Chrome">${icon(24, 24, "0 0 24 24", svg`<circle cx="12" cy="12" r="12" fill="#2fa24c"/>
          <path d="M12 12L1.600 6A12 12 0 0 1 22.400 6z" fill="#e2402f"/><path d="M12 6h10.400A12 12 0 0 1 12 24l5.200-9z" fill="#fbc116"/><path d="M1.600 6L6.800 15 12 6z" fill="#e2402f"/>
          <circle cx="12" cy="12" r="6" fill="#fff"/><circle cx="12" cy="12" r="4.600" fill="#2f7de1"/>`)}</button>
        <button class="app" type="button" aria-label="File Explorer">${icon(22, 19, "0 0 22 19", svg`<path d="M0 1h8l1.500 2H22v15H0z" fill="#f5c95b"/><path d="M0 4h22v14H0z" fill="#fbdf94"/>
          <path d="M4 18v-7.500h14V18h-3.500v-3.500h-7V18z" fill="#3f9fd8"/>`)}</button>
        <button class="app" type="button" aria-label="Excel">${icon(22, 23, "0 0 22 23", svg`<rect x="5" width="16" height="22" rx="1.500" fill="#2a9a4c"/><path d="M13 0h8v7h-8z" fill="#6fd08a"/><path d="M5 7h8v7H5z" fill="#1c6b35"/><path d="M13 7h8v7h-8z" fill="#237a3e"/>
          <rect y="10" width="11" height="11" rx="1.200" fill="#154f33"/><path d="M3 12.500l5 6M8 12.500l-5 6" stroke="#fff" stroke-width="1.600"/>`)}</button>
        <button class="app on" type="button" aria-label="Resincoat">${logo(24)}</button>
        </div>
        <div class="tray">
          ${icon(12, 7, "0 0 12 7", svg`<path d="M.5 6.500L6 1l5.500 5.500" fill="none" stroke="#fff" stroke-width="1.300"/>`)}
          <span class="net">${icon(16, 14, "0 0 16 14", svg`<path d="M5 2.500h10.500v7H3.500V6M9 9.500V13M5 13h8M.5 .5h4v4h-4zM2.500 4.500V6" fill="none" stroke="#fff" stroke-width="1.100"/>`)}</span>
          ${icon(17, 14, "0 0 17 14", svg`<path d="M.6 4.500h2.600L6.500 1.500v11L3.200 9.500H.6z" fill="none" stroke="#fff" stroke-width="1.100"/><path d="M8.500 5q1.500 2 0 4M11 3q3 4 0 8M13.500 1q4.500 6 0 12" fill="none" stroke="#fff" stroke-width="1.100"/>`)}
          <time class="clock">19:26<br>30/07/2026</time>
          ${icon(16, 16, "0 0 16 16", svg`<path d="M.6 .6h14.800v12H10L8 15l-2-2.400H.6z" fill="none" stroke="#fff" stroke-width="1.100"/>`)}
          <div class="desk"></div>
        </div>
      </nav>
    `;
  }
}
